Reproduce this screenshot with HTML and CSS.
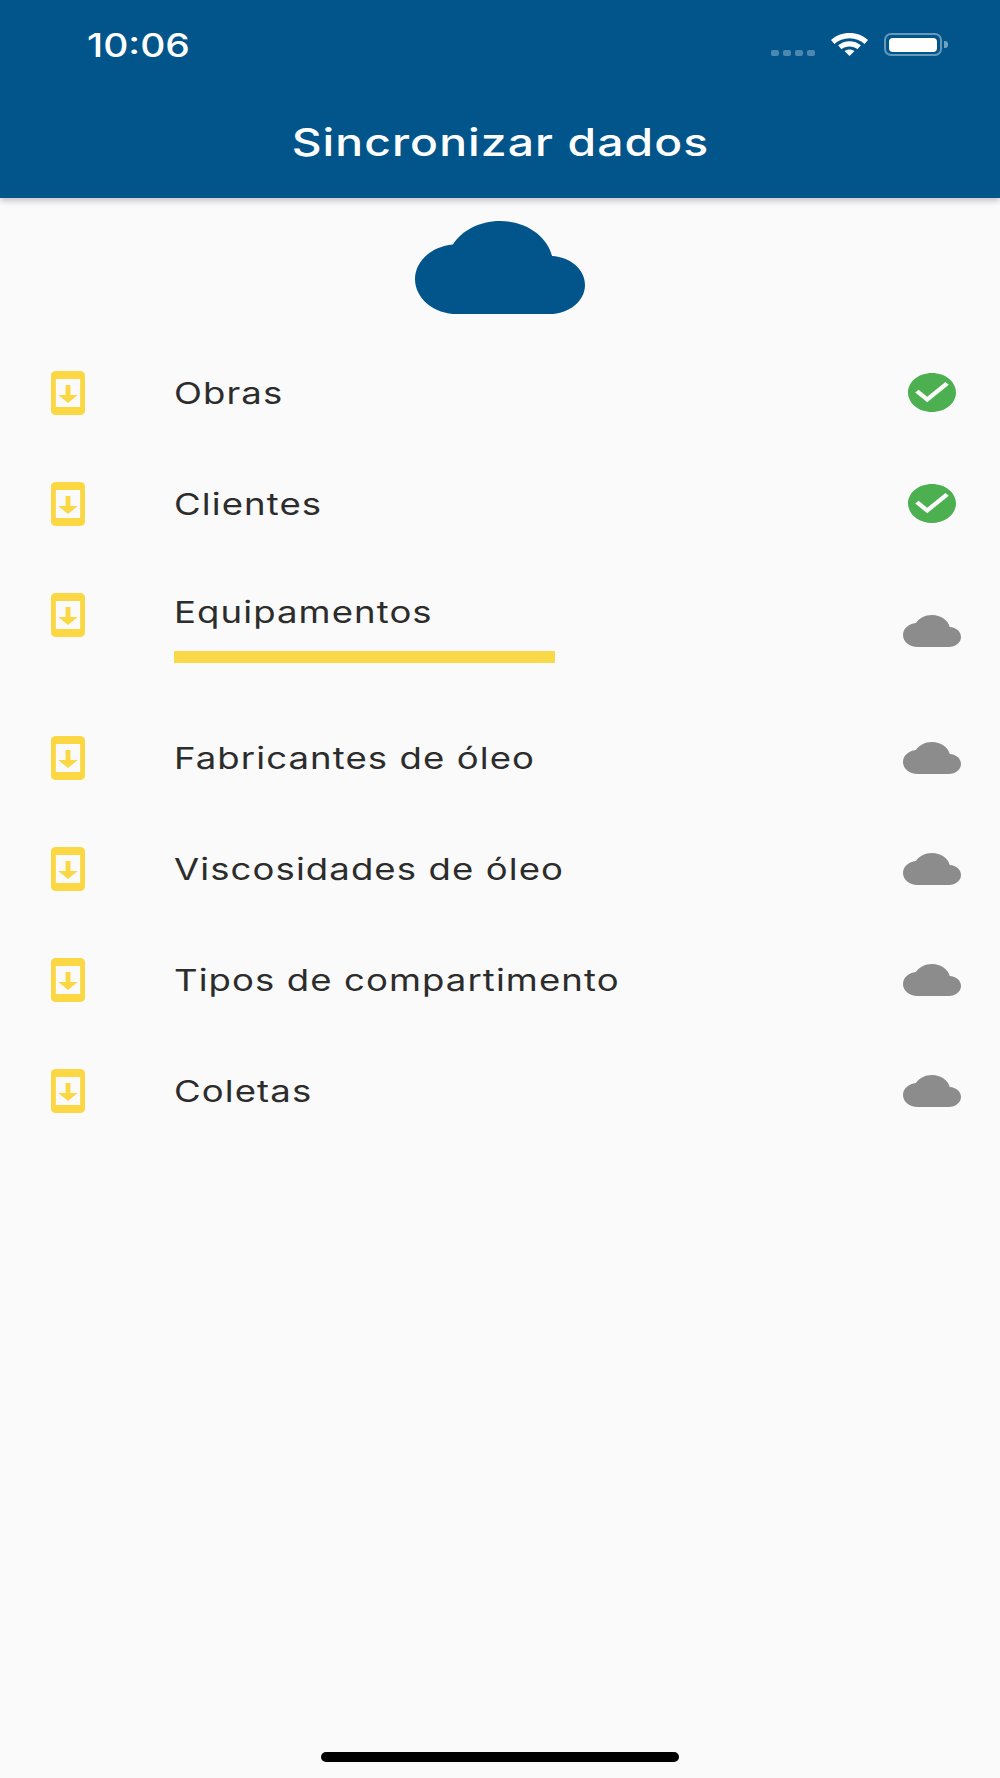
FILE: index.html
```html
<!DOCTYPE html>
<html lang="pt">
<head>
<meta charset="utf-8">
<title>Sincronizar dados</title>
<link rel="stylesheet" href="styles.css">
</head>
<body>
<div class="page">
  <header class="appbar">
    <div class="status">
      <span class="time">10:06</span>
      <div class="status-icons">
        <div class="dots"><i></i><i></i><i></i><i></i></div>
        <svg class="wifi" viewBox="0 0 37 23"><path d="M18.5 0C11.4 0 5 2.6 0 7l3.4 4C7.5 7.500 12.800 5.300 18.500 5.300S29.500 7.500 33.600 11L37 7C32 2.600 25.600 0 18.500 0Z"/><path d="M18.500 8.200C14.200 8.200 10.200 9.800 7.100 12.300L10.500 16.200C12.700 14.500 15.500 13.500 18.500 13.500S24.300 14.500 26.500 16.200L29.900 12.300C26.800 9.800 22.800 8.200 18.500 8.200Z"/><path d="M18.500 16.500C16.600 16.500 14.900 17.100 13.500 18.100L18.500 23 23.500 18.100C22.100 17.100 20.400 16.500 18.500 16.500Z"/></svg>
        <div class="battery"><div class="battery-body"><div class="battery-fill"></div></div><div class="battery-nub"></div></div>
      </div>
    </div>
    <h1 class="title"><span class="title-text">Sincronizar dados</span></h1>
  </header>

  <main class="content">
    <svg class="hero-cloud" viewBox="0 4 24 16" preserveAspectRatio="none"><path d="M19.35 10.04C18.67 6.59 15.64 4 12 4 9.11 4 6.6 5.64 5.35 8.04 2.34 8.36 0 10.91 0 14c0 3.31 2.69 6 6 6h13c2.76 0 5-2.24 5-5 0-2.64-2.05-4.78-4.65-4.96z"/></svg>

    <ul class="list">
      <li class="row">
        <svg class="sync-icon" viewBox="5 1 14 22" preserveAspectRatio="none"><path d="M17 1.01L7 1c-1.1 0-2 .9-2 2v18c0 1.100.9 2 2 2h10c1.100 0 2-.9 2-2V3c0-1.100-.9-1.990-2-1.990zM17 19H7V5h10v14zm-1-6h-3V8h-2v5H8l4 4 4-4z"/></svg>
        <div class="label-box"><span class="label">Obras</span></div>
        <svg class="done-icon" viewBox="2 2 20 20" preserveAspectRatio="none"><path d="M12 2C6.480 2 2 6.480 2 12s4.480 10 10 10 10-4.480 10-10S17.520 2 12 2zm-2 15l-5-5 1.410-1.410L10 14.170l7.590-7.590L19 8l-9 9z"/></svg>
      </li>
      <li class="row">
        <svg class="sync-icon" viewBox="5 1 14 22" preserveAspectRatio="none"><path d="M17 1.01L7 1c-1.1 0-2 .9-2 2v18c0 1.100.9 2 2 2h10c1.100 0 2-.9 2-2V3c0-1.100-.9-1.990-2-1.990zM17 19H7V5h10v14zm-1-6h-3V8h-2v5H8l4 4 4-4z"/></svg>
        <div class="label-box"><span class="label">Clientes</span></div>
        <svg class="done-icon" viewBox="2 2 20 20" preserveAspectRatio="none"><path d="M12 2C6.480 2 2 6.480 2 12s4.480 10 10 10 10-4.480 10-10S17.520 2 12 2zm-2 15l-5-5 1.410-1.410L10 14.170l7.590-7.590L19 8l-9 9z"/></svg>
      </li>
      <li class="row row-active">
        <svg class="sync-icon" viewBox="5 1 14 22" preserveAspectRatio="none"><path d="M17 1.01L7 1c-1.1 0-2 .9-2 2v18c0 1.100.9 2 2 2h10c1.100 0 2-.9 2-2V3c0-1.100-.9-1.990-2-1.990zM17 19H7V5h10v14zm-1-6h-3V8h-2v5H8l4 4 4-4z"/></svg>
        <div class="label-box"><span class="label">Equipamentos</span><div class="progress"></div></div>
        <svg class="cloud-icon" viewBox="0 4 24 16" preserveAspectRatio="none"><path d="M19.35 10.04C18.67 6.59 15.64 4 12 4 9.11 4 6.6 5.64 5.35 8.04 2.34 8.36 0 10.91 0 14c0 3.31 2.69 6 6 6h13c2.76 0 5-2.24 5-5 0-2.64-2.05-4.78-4.65-4.96z"/></svg>
      </li>
      <li class="row">
        <svg class="sync-icon" viewBox="5 1 14 22" preserveAspectRatio="none"><path d="M17 1.01L7 1c-1.1 0-2 .9-2 2v18c0 1.100.9 2 2 2h10c1.100 0 2-.9 2-2V3c0-1.100-.9-1.990-2-1.990zM17 19H7V5h10v14zm-1-6h-3V8h-2v5H8l4 4 4-4z"/></svg>
        <div class="label-box"><span class="label">Fabricantes de óleo</span></div>
        <svg class="cloud-icon" viewBox="0 4 24 16" preserveAspectRatio="none"><path d="M19.35 10.04C18.67 6.59 15.64 4 12 4 9.11 4 6.6 5.64 5.35 8.04 2.34 8.36 0 10.91 0 14c0 3.31 2.69 6 6 6h13c2.76 0 5-2.24 5-5 0-2.64-2.05-4.78-4.65-4.96z"/></svg>
      </li>
      <li class="row">
        <svg class="sync-icon" viewBox="5 1 14 22" preserveAspectRatio="none"><path d="M17 1.01L7 1c-1.1 0-2 .9-2 2v18c0 1.100.9 2 2 2h10c1.100 0 2-.9 2-2V3c0-1.100-.9-1.990-2-1.990zM17 19H7V5h10v14zm-1-6h-3V8h-2v5H8l4 4 4-4z"/></svg>
        <div class="label-box"><span class="label">Viscosidades de óleo</span></div>
        <svg class="cloud-icon" viewBox="0 4 24 16" preserveAspectRatio="none"><path d="M19.35 10.04C18.67 6.59 15.64 4 12 4 9.11 4 6.6 5.64 5.35 8.04 2.34 8.36 0 10.91 0 14c0 3.31 2.69 6 6 6h13c2.76 0 5-2.24 5-5 0-2.64-2.05-4.78-4.65-4.96z"/></svg>
      </li>
      <li class="row">
        <svg class="sync-icon" viewBox="5 1 14 22" preserveAspectRatio="none"><path d="M17 1.01L7 1c-1.1 0-2 .9-2 2v18c0 1.100.9 2 2 2h10c1.100 0 2-.9 2-2V3c0-1.100-.9-1.990-2-1.990zM17 19H7V5h10v14zm-1-6h-3V8h-2v5H8l4 4 4-4z"/></svg>
        <div class="label-box"><span class="label">Tipos de compartimento</span></div>
        <svg class="cloud-icon" viewBox="0 4 24 16" preserveAspectRatio="none"><path d="M19.35 10.04C18.67 6.59 15.64 4 12 4 9.11 4 6.6 5.64 5.35 8.04 2.34 8.36 0 10.91 0 14c0 3.31 2.69 6 6 6h13c2.76 0 5-2.24 5-5 0-2.64-2.05-4.78-4.65-4.96z"/></svg>
      </li>
      <li class="row">
        <svg class="sync-icon" viewBox="5 1 14 22" preserveAspectRatio="none"><path d="M17 1.01L7 1c-1.1 0-2 .9-2 2v18c0 1.100.9 2 2 2h10c1.100 0 2-.9 2-2V3c0-1.100-.9-1.990-2-1.990zM17 19H7V5h10v14zm-1-6h-3V8h-2v5H8l4 4 4-4z"/></svg>
        <div class="label-box"><span class="label">Coletas</span></div>
        <svg class="cloud-icon" viewBox="0 4 24 16" preserveAspectRatio="none"><path d="M19.35 10.04C18.67 6.59 15.64 4 12 4 9.11 4 6.6 5.64 5.35 8.04 2.34 8.36 0 10.91 0 14c0 3.31 2.69 6 6 6h13c2.76 0 5-2.24 5-5 0-2.64-2.05-4.78-4.65-4.96z"/></svg>
      </li>
    </ul>
  </main>

  <div class="home-bar"><div class="home-indicator"></div></div>
</div>
</body>
</html>
```

FILE: styles.css
```css
* { box-sizing: border-box; }

html, body {
  margin: 0;
  padding: 0;
}

body {
  background: #fafafa;
  font-family: Inter, Roboto, "Liberation Sans", sans-serif;
  color: #2c2c2c;
}

.page {
  width: 1000px;
  height: 1778px;
  display: flex;
  flex-direction: column;
  overflow: hidden;
  background: #fafafa;
}

.appbar {
  height: 198px;
  flex: none;
  background: #01558b;
  color: #fff;
  box-shadow: 0 3px 6px rgba(0, 0, 0, 0.22);
  position: relative;
  z-index: 1;
}

.status {
  height: 90px;
  padding: 34px 52px 0 87px;
  display: flex;
  justify-content: space-between;
  align-items: flex-start;
}

.time {
  display: inline-block;
  font-size: 32px;
  line-height: 24px;
  font-weight: 500;
  letter-spacing: 0;
  transform: scaleX(1.218);
  transform-origin: left center;
}

.status-icons {
  display: flex;
  align-items: flex-start;
  margin-top: -1px;
}

.dots {
  display: flex;
  gap: 4px;
  margin-top: 17px;
  margin-right: 16px;
}

.dots i {
  display: block;
  width: 8px;
  height: 6px;
  border-radius: 2px;
  background: rgba(255, 255, 255, 0.3);
}

.wifi {
  display: block;
  width: 37px;
  height: 23px;
  margin-right: 16px;
  fill: #fff;
}

.battery {
  display: flex;
  align-items: center;
  height: 23px;
}

.battery-body {
  width: 58px;
  height: 23px;
  padding: 2.500px 3px;
  border: 2px solid rgba(255, 255, 255, 0.4);
  border-radius: 7px;
}

.battery-fill {
  width: 100%;
  height: 100%;
  border-radius: 4px;
  background: #fff;
}

.battery-nub {
  width: 4px;
  height: 7px;
  margin-left: 2px;
  border-radius: 0 3px 3px 0;
  background: rgba(255, 255, 255, 0.45);
}

.title {
  margin: 0;
  height: 108px;
  padding-top: 25px;
  text-align: center;
  font-size: 38px;
  line-height: 54px;
  font-weight: 500;
}

.title-text {
  display: inline-block;
  letter-spacing: 0.88px;
  transform: scaleX(1.218);
}

.content {
  flex: 1;
  display: flex;
  flex-direction: column;
}

.hero-cloud {
  display: block;
  flex: none;
  width: 170px;
  height: 93px;
  margin: 23px auto 0;
  fill: #01558b;
}

.list {
  list-style: none;
  margin: 23px 0 0;
  padding: 0;
}

.row {
  height: 111px;
  padding: 0 39px 0 51px;
  display: grid;
  grid-template-columns: 34px 1fr 58px;
  align-items: center;
}

.row-active {
  height: 143px;
}

.sync-icon {
  display: block;
  width: 34px;
  height: 44px;
  fill: #fbd843;
}

.row-active .sync-icon {
  align-self: start;
  margin-top: 34px;
}

.label-box {
  padding-left: 89px;
}

.label {
  display: inline-block;
  font-size: 30px;
  line-height: 44px;
  letter-spacing: 0.89px;
  transform: scaleX(1.218);
  transform-origin: left center;
  white-space: nowrap;
}

.row-active .label-box {
  align-self: start;
  padding-top: 31px;
}

.progress {
  width: 381px;
  height: 12px;
  margin-top: 17px;
  background: #f9d947;
}

.done-icon {
  display: block;
  justify-self: center;
  width: 48px;
  height: 39px;
  fill: #4caf50;
}

.cloud-icon {
  display: block;
  width: 58px;
  height: 32px;
  fill: #8c8c8c;
}

.home-bar {
  flex: none;
  height: 26px;
  padding: 0 321px;
}

.home-indicator {
  height: 10px;
  border-radius: 5px;
  background: #000;
}
```
